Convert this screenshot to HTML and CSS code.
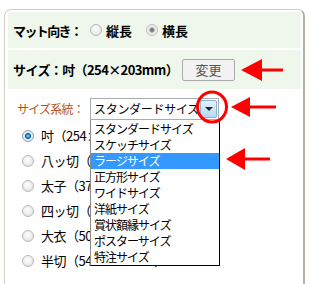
FILE: index.html
```html
<!DOCTYPE html>
<html lang="ja">
<head>
<meta charset="utf-8">
<link rel="stylesheet" href="styles.css">
</head>
<body>
<div class="page">
  <div class="frame">
    <div class="band band-top">
      <span class="lbl-mat">マット向き：</span>
      <span class="opt"><span class="radio"></span>縦長</span>
      <span class="opt"><span class="radio radio-on-grey"></span>横長</span>
    </div>
    <div class="band band-size">
      <span class="lbl-size">サイズ：吋（254×203mm）</span>
      <button class="btn">変更</button>
    </div>
    <div class="sysrow">
      <span class="lbl-sys">サイズ系統：</span>
      <div class="select">
        <span class="select-text">スタンダードサイズ</span>
        <span class="select-btn"><span class="tri"></span></span>
      </div>
    </div>
    <ul class="sizes">
      <li><span class="radio radio-on-blue"></span>吋（254×203mm）</li>
      <li><span class="radio"></span>八ッ切（303×242mm）</li>
      <li><span class="radio"></span>太子（379×288mm）</li>
      <li><span class="radio"></span>四ッ切（424×348mm）</li>
      <li><span class="radio"></span>大衣（509×394mm）</li>
      <li><span class="radio"></span>半切（545×424mm）</li>
    </ul>
  </div>

  <ul class="dropdown">
    <li>スタンダードサイズ</li>
    <li>スケッチサイズ</li>
    <li class="hl">ラージサイズ</li>
    <li>正方形サイズ</li>
    <li>ワイドサイズ</li>
    <li>洋紙サイズ</li>
    <li>賞状額縁サイズ</li>
    <li>ポスターサイズ</li>
    <li>特注サイズ</li>
  </ul>

  <svg class="marks" width="310" height="284" viewBox="0 0 310 284">
    <g fill="#f00">
      <polygon points="241,70 262,59 262,81"/>
      <rect x="260" y="68.5" width="23" height="3"/>
      <polygon points="231,107 250,97 250,117"/>
      <rect x="248" y="105.5" width="28" height="3"/>
      <polygon points="226,159 245,148 245,170"/>
      <rect x="243" y="157.5" width="27" height="3"/>
    </g>
    <ellipse cx="212" cy="107" rx="14.5" ry="15" fill="none" stroke="#f00" stroke-width="3"/>
  </svg>
</div>
</body>
</html>
```

FILE: styles.css
```css
html, body {
  margin: 0;
  padding: 0;
  background: #fff;
}
body {
  font-family: "Noto Sans CJK JP", "Noto Sans", sans-serif;
  font-size: 13px;
  line-height: 1.2;
  color: #000;
}
.page {
  position: relative;
  width: 310px;
  height: 284px;
  overflow: hidden;
}
.frame {
  margin: 9px 5px 0 4px;
  height: 290px;
  border: 1px solid #d3cec6;
  border-right: 2px solid #b6aea4;
  border-bottom: none;
  border-radius: 7px 7px 0 0;
  padding: 2px 2px 0 3px;
  box-sizing: border-box;
}
.band {
  background: #eff7ec;
  display: flex;
  align-items: center;
  padding-left: 5px;
  font-weight: bold;
  font-size: 13px;
  line-height: 1;
  white-space: nowrap;
}
.band-top {
  height: 36px;
}
.band-size {
  height: 39px;
  margin-top: 2px;
}
.lbl-mat {
  width: 77px;
  flex: none;
  font-size: 13px;
  letter-spacing: -1.6px;
}
.opt {
  display: flex;
  align-items: center;
  margin-right: 14px;
  flex: none;
}
.opt .radio {
  margin-right: 4px;
}
.lbl-size {
  width: 169px;
  flex: none;
  font-size: 13px;
  letter-spacing: -0.6px;
}
.btn {
  width: 53px;
  height: 22px;
  flex: none;
  border: 1px solid #ababab;
  border-radius: 2px;
  background: #f2f2f2;
  color: #555;
  font-family: "Noto Sans CJK JP", sans-serif;
  font-size: 13px;
  padding: 0;
  line-height: 20px;
}
.radio {
  display: inline-block;
  width: 12px;
  height: 12px;
  border-radius: 50%;
  box-sizing: border-box;
  border: 1px solid #b9b9b9;
  background: radial-gradient(circle at 45% 40%, #ffffff 0%, #f0f0f0 45%, #d6d6d6 100%);
  flex: none;
}
.radio-on-grey {
  background: radial-gradient(circle, #6f6f6f 0%, #8c8c8c 28%, #e4e4e4 42%, #f4f4f4 70%, #d0d0d0 100%);
}
.radio-on-blue {
  border-color: #8c9aa6;
  background: radial-gradient(circle, #9fe0ff 0%, #2d8fd6 22%, #0b5da8 36%, #d8e6f0 48%, #f4f4f4 70%, #c9c9c9 100%);
}
.sysrow {
  display: flex;
  align-items: center;
  margin-top: 9px;
  height: 22px;
  padding-left: 9px;
  white-space: nowrap;
}
.lbl-sys {
  color: #b55317;
  width: 73px;
  flex: none;
  font-size: 12px;
  letter-spacing: -0.8px;
}
.select {
  width: 129px;
  height: 22px;
  flex: none;
  box-sizing: border-box;
  border: 1px solid #a5acb2;
  background: #fff;
  display: flex;
  align-items: center;
  justify-content: space-between;
  padding: 1px 1px 1px 3px;
}
.select-text {
  line-height: 1;
  font-size: 12px;
  letter-spacing: -0.3px;
}
.select-btn {
  width: 17px;
  height: 18px;
  flex: none;
  box-sizing: border-box;
  border: 1px solid #8fb0d0;
  border-radius: 2px;
  background: linear-gradient(#e4f2fc, #b7d9f3);
  display: flex;
  align-items: center;
  justify-content: center;
}
.tri {
  width: 0;
  height: 0;
  border-left: 4px solid transparent;
  border-right: 4px solid transparent;
  border-top: 4px solid #1d2a38;
}
.sizes {
  list-style: none;
  margin: 0;
  padding: 3px 0 0 14px;
}
.sizes li {
  height: 25px;
  display: flex;
  align-items: center;
  white-space: nowrap;
  letter-spacing: -0.5px;
}
.sizes .radio {
  margin-right: 7px;
}
.dropdown {
  position: absolute;
  left: 90px;
  top: 120px;
  width: 130px;
  margin: 0;
  padding: 0;
  list-style: none;
  background: #fff;
  border: 1px solid #000;
  border-left-color: #8a8a8a;
  border-top: none;
  box-sizing: border-box;
  font-size: 12px;
  letter-spacing: -1px;
}
.dropdown li {
  height: 16px;
  line-height: 16px;
  padding-left: 3px;
  white-space: nowrap;
  overflow: hidden;
}
.dropdown li:first-child {
  margin-top: 1px;
}
.dropdown .hl {
  background: #3399ff;
  color: #fff;
}
.marks {
  position: absolute;
  left: 0;
  top: 0;
  pointer-events: none;
}
```
